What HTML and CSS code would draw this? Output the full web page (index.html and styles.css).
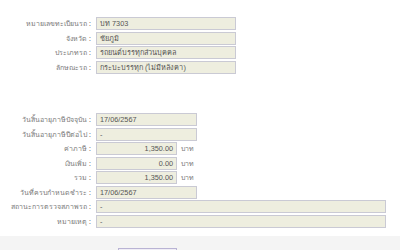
FILE: index.html
```html
<!DOCTYPE html>
<html lang="th">
<head>
    <meta charset="UTF-8">
    <title>ข้อมูลภาษีรถ</title>
    <link rel="stylesheet" href="styles.css">
</head>
<body>
    <div class="container">
        <div class="section">
            <div class="row">
                <label>หมายเลขทะเบียนรถ :</label>
                <div class="field w140">บท 7303</div>
            </div>
            <div class="row">
                <label>จังหวัด :</label>
                <div class="field w140">ชัยภูมิ</div>
            </div>
            <div class="row">
                <label>ประเภทรถ :</label>
                <div class="field w140">รถยนต์บรรทุกส่วนบุคคล</div>
            </div>
            <div class="row">
                <label>ลักษณะรถ :</label>
                <div class="field w140">กระบะบรรทุก (ไม่มีหลังคา)</div>
            </div>
        </div>

        <div class="section tax">
            <div class="row">
                <label>วันสิ้นอายุภาษีปัจจุบัน :</label>
                <div class="field w101">17/06/2567</div>
            </div>
            <div class="row">
                <label>วันสิ้นอายุภาษีปีต่อไป :</label>
                <div class="field w101">-</div>
            </div>
            <div class="row">
                <label>ค่าภาษี :</label>
                <div class="field w81 num">1,350.00</div>
                <span class="unit">บาท</span>
            </div>
            <div class="row">
                <label>เงินเพิ่ม :</label>
                <div class="field w81 num">0.00</div>
                <span class="unit">บาท</span>
            </div>
            <div class="row">
                <label>รวม :</label>
                <div class="field w81 num">1,350.00</div>
                <span class="unit">บาท</span>
            </div>
            <div class="row">
                <label>วันที่ครบกำหนดชำระ :</label>
                <div class="field w101">17/06/2567</div>
            </div>
            <div class="row">
                <label>สถานะการตรวจสภาพรถ :</label>
                <div class="field wide">-</div>
            </div>
            <div class="row">
                <label>หมายเหตุ :</label>
                <div class="field wide">-</div>
            </div>
        </div>
    </div>

    <div class="footer">
        <button class="button" aria-label="ย้อนกลับ"></button>
    </div>
</body>
</html>
```

FILE: styles.css
```css
body {
    margin: 0;
    padding: 0;
    background: #fff;
    font-family: Tahoma, "Noto Sans", sans-serif;
    font-size: 7px;
    overflow: hidden;
}

.container {
    padding-top: 17px;
    height: 219px;
}

.section {
    display: flex;
    flex-direction: column;
    gap: 1.5px;
}

.tax {
    margin-top: 39.5px;
}

.row {
    display: flex;
    align-items: center;
    height: 13px;
}

label {
    width: 92px;
    text-align: right;
    color: #7a7a7a;
    padding-right: 1px;
    box-sizing: border-box;
    white-space: nowrap;
}

.field {
    height: 13px;
    line-height: 12px;
    box-sizing: border-box;
    margin-left: 4px;
    padding: 0 3px;
    background: #eeeedf;
    border: 1px solid #cacad4;
    color: #555;
    font-family: "Liberation Sans", Tahoma, sans-serif;
    font-size: 7.3px;
    white-space: nowrap;
    overflow: hidden;
}

.w140 { width: 140px; }
.w101 { width: 101px; }
.w81 { width: 81px; }
.wide { width: 290px; }

.num {
    text-align: right;
}

.unit {
    margin-left: 4px;
    color: #7a7a7a;
}

.footer {
    background: #f4f4f4;
    height: 14px;
    padding-top: 12px;
    padding-left: 118px;
    box-sizing: border-box;
    overflow: hidden;
}

.button {
    display: block;
    width: 59px;
    height: 20px;
    background: #f0eef6;
    border: 1px solid #b9b3d4;
    padding: 0;
}
```
